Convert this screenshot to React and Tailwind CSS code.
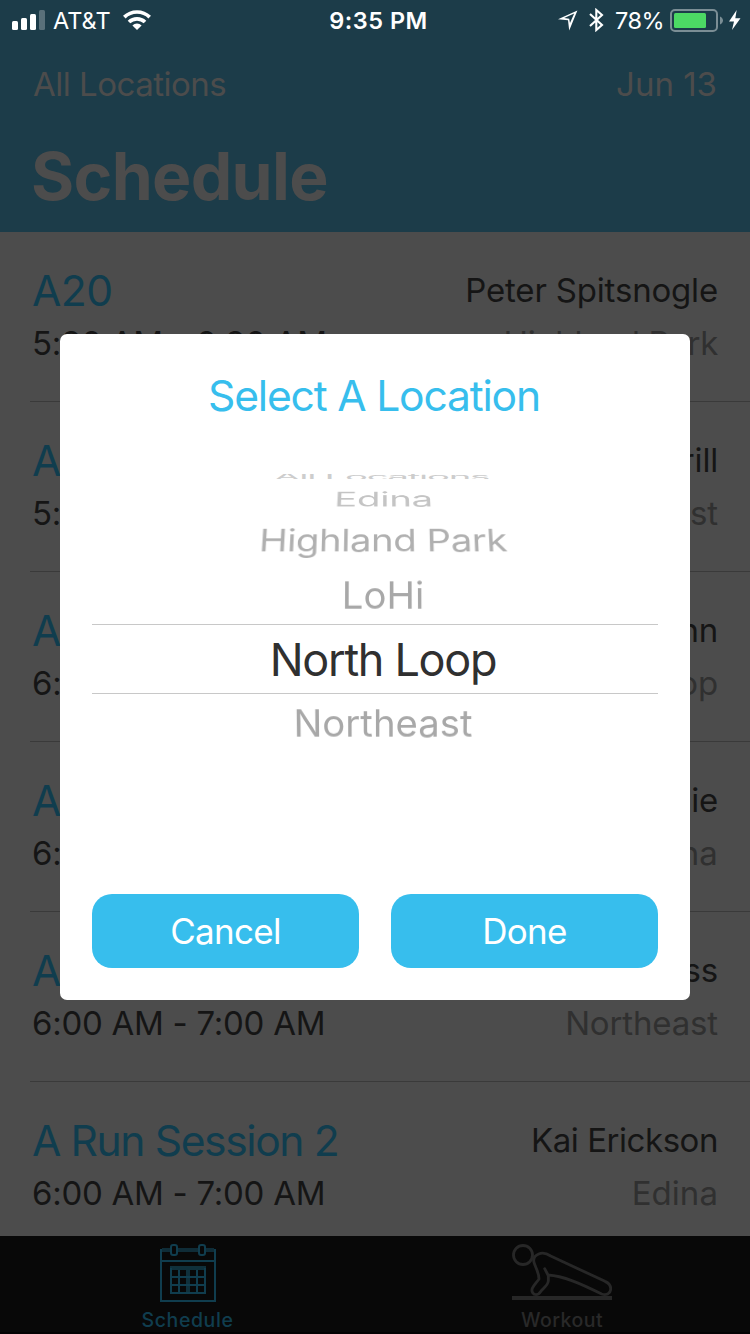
const sessions = [
  { title: "A20", titleClass: "tracking-[-0.6px]", time: "5:30 AM - 6:30 AM", coach: "Peter Spitsnogle", coachClass: "tracking-[-0.18px]", place: "Highland Park", placeClass: "tracking-[-0.3px]" },
  { title: "A20", titleClass: "tracking-[-0.6px]", time: "5:30 AM - 6:30 AM", coach: "Merrill", coachClass: "tracking-[-0.2px]", place: "Northeast", placeClass: "tracking-[-0.15px]" },
  { title: "A20", titleClass: "tracking-[-0.6px]", time: "6:00 AM - 7:00 AM", coach: "Mann", coachClass: "tracking-[-0.2px]", place: "North Loop", placeClass: "tracking-[-0.1px]" },
  { title: "A20", titleClass: "tracking-[-0.6px]", time: "6:00 AM - 7:00 AM", coach: "Julie", coachClass: "tracking-[-0.2px]", place: "Edina", placeClass: "tracking-[0.1px]" },
  { title: "A20", titleClass: "tracking-[-0.6px]", time: "6:00 AM - 7:00 AM", coach: "Ross", coachClass: "tracking-[-0.2px]", place: "Northeast", placeClass: "tracking-[-0.15px]" },
  { title: "A Run Session 2", titleClass: "tracking-[-1.4px]", time: "6:00 AM - 7:00 AM", coach: "Kai Erickson", coachClass: "tracking-[-0.45px]", place: "Edina", placeClass: "tracking-[0.05px]" },
];

function SignalIcon() {
  return (
    <svg width="33" height="20" viewBox="0 0 33 20" fill="#fff" className="shrink-0">
      <rect x="0" y="11" width="6" height="9" rx="1.5" />
      <rect x="9" y="8" width="6" height="12" rx="1.5" />
      <rect x="18" y="4" width="6" height="16" rx="1.5" />
      <rect x="27" y="0" width="6" height="20" rx="1.5" opacity="0.27" />
    </svg>
  );
}

function WifiIcon() {
  return (
    <svg width="28" height="20" viewBox="0 0 28 20" fill="none" stroke="#fff" strokeWidth="3.7" className="shrink-0">
      <path d="M1.3 7.1A18.3 18.3 0 0 1 26.7 7.1" />
      <path d="M6 12A11.6 11.6 0 0 1 22 12" />
      <path d="M9.4 15.4A6.6 6.6 0 0 1 18.6 15.4L14 20Z" fill="#fff" stroke="none" />
    </svg>
  );
}

function LocationArrow() {
  return (
    <svg width="20" height="21" viewBox="0 0 20 21" className="shrink-0">
      <path fill="#fff" fillRule="evenodd" d="M19.4 0.4L11.2 20.6L10 10.3L0 9.2ZM16.2 3.4L6.2 8L11.2 8.7L12 13Z" />
    </svg>
  );
}

function BluetoothIcon() {
  return (
    <svg width="15" height="24" viewBox="0 0 15 24" fill="none" stroke="#fff" strokeWidth="2.1" className="shrink-0">
      <path d="M1 6L13 17L7.3 22V2L13 7L1 18" />
    </svg>
  );
}

function BatteryIcon() {
  return (
    <svg width="53" height="23" viewBox="0 0 53 23" className="shrink-0">
      <rect x="1" y="1" width="46" height="21" rx="4" fill="none" stroke="#7b8e95" strokeWidth="2" />
      <path d="M50 7.5C52 8.5 53 10 53 11.5S52 14.500 50 15.500Z" fill="#7b8e95" />
      <rect x="4" y="4" width="32" height="15" rx="1.500" fill="#4cd964" />
    </svg>
  );
}

function BoltIcon() {
  return (
    <svg width="12" height="20" viewBox="0 0 12 20" className="shrink-0">
      <path d="M7.700 0L0 11.400H5L3 20L11.500 8.200H6.300Z" fill="#fff" />
    </svg>
  );
}

function CalendarIcon() {
  return (
    <svg width="56" height="58" viewBox="0 0 56 58" fill="none" className="shrink-0">
      <path d="M18 6H38" stroke="#0f2c37" strokeWidth="4" />
      <path d="M2 6H10M46 6H54" stroke="#0f2c37" strokeWidth="4" />
      <path d="M1 5V57H55V5M1 17H55" stroke="#103d4e" strokeWidth="2" />
      <rect x="11" y="1" width="6" height="10" rx="2" stroke="#103d4e" strokeWidth="2" />
      <rect x="39" y="1" width="6" height="10" rx="2" stroke="#103d4e" strokeWidth="2" />
      <path d="M10 24H46" stroke="#0f303b" strokeWidth="4" />
      <path d="M28 24V49" stroke="#0f303b" strokeWidth="4" />
      <path d="M11 24V49H45V24M11 33H45M11 41H45M19 26V49M37 26V49" stroke="#103d4e" strokeWidth="2" />
    </svg>
  );
}

function PushupIcon() {
  return (
    <svg width="100" height="56" viewBox="66 57 300 168" fill="none" stroke="#272727" strokeWidth="8.500" strokeLinecap="round" strokeLinejoin="round" className="shrink-0">
      <circle cx="99" cy="90" r="28.500" />
      <path d="M164 131L174 150C220 153 270 175 335 207C348 212 361 207 362 193C363 180 357 174 345 169L182 93C170 85 158 82 146 87C134 92 129 101 132 112C137 130 147 142 147 162C140 172 131 180 127 190C123 200 130 209 138 209C145 209 150 203 154 197C162 188 174 180 175 168V150" />
      <path d="M66 219H366" strokeWidth="12" strokeLinecap="butt" />
    </svg>
  );
}

function StatusBar() {
  return (
    <div className="flex h-10 items-center text-2xl leading-[41px] text-white">
      <div className="flex flex-1 items-center pl-3">
        <SignalIcon />
        <span className="ml-[8px] text-[23.5px]">AT&amp;T</span>
        <span className="ml-[12px]"><WifiIcon /></span>
      </div>
      <div className="pl-[4px] text-[23.5px] font-semibold tracking-[0.5px]">9:35 PM</div>
      <div className="flex flex-1 items-center justify-end pr-[9px]">
        <LocationArrow />
        <span className="ml-[11px]"><BluetoothIcon /></span>
        <span className="ml-[11px] text-[23.5px] tracking-[-0.5px]">78%</span>
        <span className="ml-[6px]"><BatteryIcon /></span>
        <span className="ml-[6px]"><BoltIcon /></span>
      </div>
    </div>
  );
}

function SessionRow({ session, last }) {
  return (
    <li className={last ? "h-[154px] pl-[30px]" : "h-[170px] pl-[30px]"}>
      <div className={last ? "h-full pt-8 pr-[32px] pl-[2px] text-[33px] leading-[53px]" : "h-full border-b border-[#3a3a3a] pt-8 pr-[32px] pl-[2px] text-[33px] leading-[53px]"}>
        <div className="flex h-[53px] justify-between whitespace-nowrap">
          <span className={`text-[42.6px] text-[#103d4e] ${session.titleClass}`}>{session.title}</span>
          <span className={`text-[#151515] ${session.coachClass}`}>{session.coach}</span>
        </div>
        <div className="flex h-[53px] justify-between whitespace-nowrap">
          <span className="tracking-[-0.27px] text-[#151515]">{session.time}</span>
          <span className={`text-[#303030] ${session.placeClass}`}>{session.place}</span>
        </div>
      </div>
    </li>
  );
}

function LocationDialog() {
  return (
    <div className="absolute top-[334px] left-[60px] flex h-[666px] w-[630px] flex-col rounded-[7px] bg-white px-8 pb-8">
      <h2 className="h-[140px] pt-[31px] pr-[2px] text-center text-[42.6px] leading-[61px] tracking-[-1.2px] text-[#37beed]">Select A Location</h2>
      <div className="flex flex-1 flex-col text-center text-[38.3px] whitespace-nowrap">
        <div className="h-[5px] overflow-hidden pl-[13px] leading-[6px] text-[#cdcdcd]">
          <div className="scale-y-[0.22] tracking-[-1.3px]">All Locations</div>
        </div>
        <div className="h-10 pl-[17px] leading-10 tracking-[-0.3px] text-[#c4c4c4]">
          <div className="[transform:perspective(1400px)_rotateX(58deg)]">Edina</div>
        </div>
        <div className="h-[42px] pl-[16px] leading-[42px] tracking-[-0.45px] text-[#b0b0b0]">
          <div className="[transform:perspective(1400px)_rotateX(36deg)]">Highland Park</div>
        </div>
        <div className="h-[63px] pt-[3px] pl-[16px] leading-[63px] text-[#a8a8a8]">
          <div className="[transform:perspective(1400px)_rotateX(12deg)]">LoHi</div>
        </div>
        <div className="h-[70px] border-y border-[#c8c8c8] pt-px pl-4 text-[45px] leading-[68px] tracking-[-1.3px] text-[#303030]">North Loop</div>
        <div className="h-[58px] pl-[16px] leading-[58px] text-[#a8a8a8]">
          <div className="[transform:perspective(1400px)_rotateX(-12deg)]">Northeast</div>
        </div>
      </div>
      <div className="grid h-[74px] grid-cols-2 gap-8 text-[35px] text-white">
        <button className="rounded-[20px] bg-[#37beed] tracking-[-0.7px]">Cancel</button>
        <button className="rounded-[20px] bg-[#37beed] tracking-[-0.7px]">Done</button>
      </div>
    </div>
  );
}

export default function App() {
  return (
    <div className="relative flex h-[1334px] w-[750px] flex-col overflow-hidden bg-[#4c4c4c] font-['Inter',sans-serif]">
      <header className="h-[232px] bg-[#1c3c49] text-[#4c4c4c]">
        <StatusBar />
        <div className="flex h-[89px] justify-between pr-[33px] pl-[33px] text-[33px] leading-[89px]">
          <span className="tracking-[-0.5px]">All Locations</span>
          <span>Jun 13</span>
        </div>
        <h1 className="pl-[31px] text-[66px] leading-[94px] font-bold tracking-[-0.7px]">Schedule</h1>
      </header>
      <ul className="flex-1">
        {sessions.map((s, i) => (
          <SessionRow key={i} session={s} last={i === sessions.length - 1} />
        ))}
      </ul>
      <nav className="grid h-[98px] grid-cols-2 border-b-2 border-[#030203] bg-[#080808] text-[19.5px] leading-[22px] font-medium">
        <div className="flex flex-col items-center pt-2 text-[#103d4e]">
          <CalendarIcon />
          <span className="mt-[7px] tracking-[0.6px]">Schedule</span>
        </div>
        <div className="flex flex-col items-center pt-2 pr-px text-[#292929]">
          <PushupIcon />
          <span className="mt-[9px] tracking-[0.45px]">Workout</span>
        </div>
      </nav>
      <LocationDialog />
    </div>
  );
}
